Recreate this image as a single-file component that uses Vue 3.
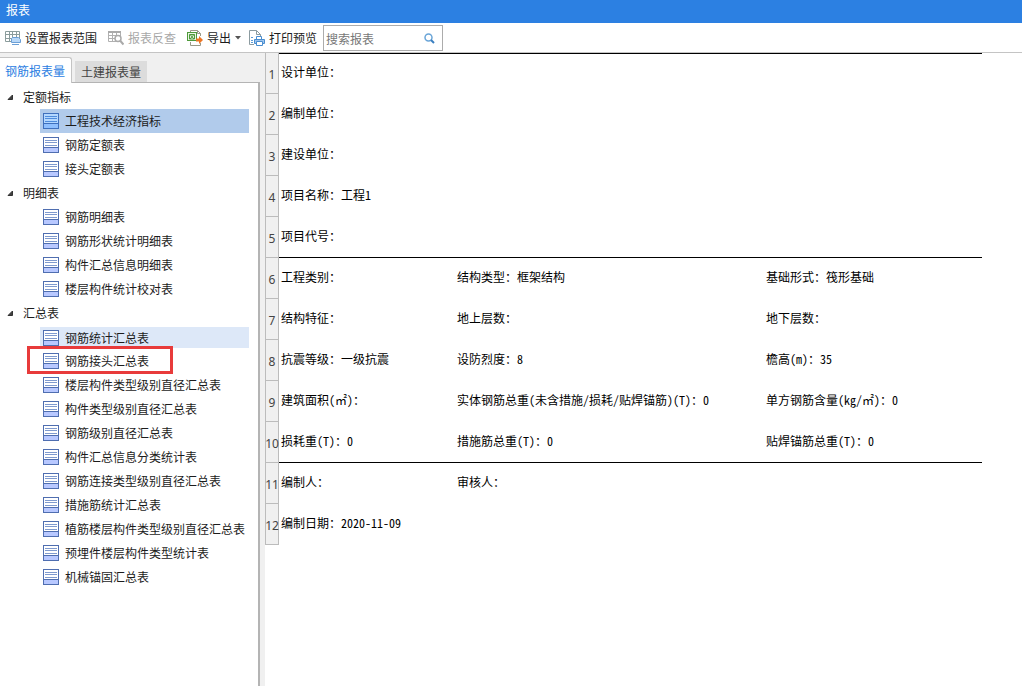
<script setup>
import { ref } from 'vue'

const search = ref('')
const activeTab = ref('钢筋报表量')
const selected = ref('工程技术经济指标')
const hovered = '钢筋统计汇总表'
const marked = '钢筋接头汇总表'

const tabs = ['钢筋报表量', '土建报表量']

const groups = [
  { name: '定额指标', items: ['工程技术经济指标', '钢筋定额表', '接头定额表'] },
  { name: '明细表', items: ['钢筋明细表', '钢筋形状统计明细表', '构件汇总信息明细表', '楼层构件统计校对表'] },
  {
    name: '汇总表',
    items: [
      '钢筋统计汇总表',
      '钢筋接头汇总表',
      '楼层构件类型级别直径汇总表',
      '构件类型级别直径汇总表',
      '钢筋级别直径汇总表',
      '构件汇总信息分类统计表',
      '钢筋连接类型级别直径汇总表',
      '措施筋统计汇总表',
      '植筋楼层构件类型级别直径汇总表',
      '预埋件楼层构件类型统计表',
      '机械锚固汇总表'
    ]
  }
]

const rows = [
  ['设计单位：', '', ''],
  ['编制单位：', '', ''],
  ['建设单位：', '', ''],
  ['项目名称：工程1', '', ''],
  ['项目代号：', '', ''],
  ['工程类别：', '结构类型：框架结构', '基础形式：筏形基础'],
  ['结构特征：', '地上层数：', '地下层数：'],
  ['抗震等级：一级抗震', '设防烈度：8', '檐高(m)：35'],
  ['建筑面积(㎡)：', '实体钢筋总重(未含措施/损耗/贴焊锚筋)(T)：0', '单方钢筋含量(kg/㎡)：0'],
  ['损耗重(T)：0', '措施筋总重(T)：0', '贴焊锚筋总重(T)：0'],
  ['编制人：', '审核人：', ''],
  ['编制日期：2020-11-09', '', '']
]
const ruledRows = [5, 10]
</script>

<template>
  <div class="window">
    <header class="title">报表</header>

    <div class="toolbar">
      <button class="tool range" type="button">
        <svg width="16" height="16" viewBox="0 0 16 16" fill="none">
          <path d="M.5 1.5h14v10H.5zM.5 4.5h14M.5 8.5h14M4.5 1.5v10M7.5 1.5v10M11.5 1.5v10" stroke="#8b9c9c" />
          <path d="M7.5 7.5h6l2 2v3h-9v-4z" fill="#b9d8f8" stroke="#6b9fd6" />
          <path d="M7 14.5h7" stroke="#6b9fd6" />
        </svg>
        <span>设置报表范围</span>
      </button>
      <button class="tool lookup" type="button" disabled>
        <svg width="16" height="16" viewBox="0 0 16 16" fill="none">
          <path d="M.5 1.5h12v10H.5zM.5 5.5h12M.5 8.5h8M4.500 1.500v10M8.500 1.500v4" stroke="#b0b0b0" />
          <path d="M0 1h13v2H0z" fill="#aaa" />
          <circle cx="10" cy="8.500" r="3" fill="#fff" stroke="#aaa" stroke-width="1.500" />
          <path d="M12 10.500l3.500 4" stroke="#aaa" stroke-width="2" />
        </svg>
        <span>报表反查</span>
      </button>
      <button class="tool export" type="button">
        <svg width="16" height="16" viewBox="0 0 16 16" fill="none">
          <path d="M3.500 2V.500h7l3 3V6M3.500 12v3.500h10V13M10.500.500v3h3" stroke="#9a9a8a" />
          <rect x=".5" y="2.500" width="9" height="8" fill="#e9f5e4" stroke="#4f9a3b" />
          <path d="M3 4.500l4 4.500M7 4.500l-4 4.500M2.500 4.500h5v4.500h-5z" stroke="#4f9a3b" />
          <path d="M9 8.500h3V6l4 4-4 4v-2.500H9z" fill="#ee7624" />
        </svg>
        <span>导出</span>
        <svg class="caret" width="6" height="4" viewBox="0 0 6 4"><path d="M0 0h6L3 3.500z" fill="#555" /></svg>
      </button>
      <button class="tool print" type="button">
        <svg width="16" height="16" viewBox="0 0 16 16" fill="none">
          <path d="M5 14.500H.5V.5h7l4 4V6M7.500.5v4h4" stroke="#8c9ba0" />
          <path d="M2 7.500h2M2 10.500h2M2 12.500h2" stroke="#5b9bd5" />
          <path d="M7.500 9V6.500h5V9" fill="#fff" stroke="#4a8ed0" />
          <path d="M5.500 9.500h10v4h-10z" fill="#9cc4ee" stroke="#4a8ed0" />
          <path d="M7.500 11.500h6v4h-6z" fill="#fff" stroke="#4a8ed0" />
        </svg>
        <span>打印预览</span>
      </button>
      <div class="search">
        <input v-model="search" type="text" placeholder="搜索报表" aria-label="搜索报表" />
        <button type="button" aria-label="搜索">
          <svg width="11" height="11" viewBox="0 0 11 11" fill="none">
            <circle cx="4.500" cy="4.500" r="3.500" stroke="#6aa5d8" stroke-width="1.500" />
            <path d="M7 7l3 3" stroke="#3a7fc0" stroke-width="2" />
          </svg>
        </button>
      </div>
    </div>

    <div class="body">
      <aside class="side">
        <div class="tabs" role="tablist">
          <button
            v-for="t in tabs"
            :key="t"
            type="button"
            role="tab"
            :aria-selected="t === activeTab"
            :class="['tab', { active: t === activeTab }]"
            @click="activeTab = t"
          >{{ t }}</button>
        </div>
        <ul class="tree">
          <li v-for="g in groups" :key="g.name">
            <div class="group">
              <svg width="7" height="7" viewBox="0 0 7 7"><path d="M5.500 1v4.500H1z" fill="#404040" stroke="#333" /></svg>
              <span>{{ g.name }}</span>
            </div>
            <ul>
              <li v-for="item in g.items" :key="item" :class="['leaf', { marked: item === marked }]">
                <button
                  type="button"
                  :class="['item', { selected: item === selected, hovered: item === hovered }]"
                  @click="selected = item"
                >
                  <svg width="16" height="16" viewBox="0 0 16 16">
                    <path class="sheet" d="M0 0h16v16H0z" />
                    <path class="page" d="M1 1h14v9H1z" />
                    <path class="band" d="M1 11h14v4H1z" />
                    <path class="lines" d="M2 3h12v1H2zM2 5h12v1H2zM2 8h12v1H2z" />
                  </svg>
                  <span>{{ item }}</span>
                </button>
              </li>
            </ul>
          </li>
        </ul>
      </aside>

      <main class="report">
        <table>
          <colgroup>
            <col class="c-num" />
            <col class="c-first" />
            <col class="c-second" />
            <col />
          </colgroup>
          <tbody>
            <tr v-for="(row, i) in rows" :key="i" :class="{ ruled: ruledRows.includes(i + 1), first: i === 0 }">
              <th scope="row"><span>{{ i + 1 }}</span></th>
              <td v-for="(cell, j) in row" :key="j">{{ cell }}</td>
            </tr>
          </tbody>
        </table>
      </main>
    </div>
  </div>
</template>

<style>
body {
  background: #fff;
}
</style>

<style scoped>
.window {
  display: flex;
  flex-direction: column;
  min-height: 100vh;
  font: 12px/16px 'Noto Sans CJK SC', sans-serif;
  color: #1c1c1c;
}
button {
  font: inherit;
  color: inherit;
  background: none;
  border: 0;
  padding: 0;
  margin: 0;
}
svg {
  flex: none;
}
.title {
  height: 19px;
  padding: 1px 6px 3px;
  line-height: 18px;
  color: #fff;
  background: #2c80e2;
}
.toolbar {
  display: flex;
  align-items: center;
  height: 28px;
  padding: 1px 5px 0;
  background: #fff;
  border-bottom: 1px solid #c4c4c4;
}
.tool {
  display: flex;
  align-items: center;
  gap: 4px;
  height: 24px;
  margin-right: 11px;
  white-space: nowrap;
}
.tool:disabled {
  color: #a8a8a8;
}
.tool.export {
  margin-right: 8px;
}
.tool.print {
  margin-right: 6px;
}
.search {
  display: flex;
  align-items: center;
  box-sizing: border-box;
  width: 120px;
  height: 26px;
  border: 1px solid #acacac;
  background: #fff;
}
.search input {
  flex: 1;
  min-width: 0;
  height: 24px;
  box-sizing: border-box;
  padding: 0 2px;
  border: 0;
  outline: 0;
  font: inherit;
  background: none;
}
.search input::placeholder {
  color: #777;
  opacity: 1;
}
.search button {
  display: flex;
  padding: 0 7px;
}
.body {
  display: flex;
  flex: 1;
}
.side {
  display: flex;
  flex-direction: column;
  flex: none;
  width: 260px;
  padding-right: 5px;
  background: #f0f0f0;
}
.tabs {
  display: flex;
  align-items: flex-end;
  gap: 3px;
  height: 29px;
  border-bottom: 1px solid #b4b4b4;
}
.tab {
  box-sizing: border-box;
  width: 72px;
  height: 21px;
  background: #dcdcdc;
  color: #444;
  white-space: nowrap;
}
.tab.active {
  height: 26px;
  margin-bottom: -1px;
  padding: 0 1px 0 0;
  background: #fff;
  color: #2c80e2;
  border: 1px solid #c4c4c4;
  border-width: 1px 1px 0 0;
  border-radius: 0 3px 0 0;
}
.tree {
  flex: 1;
  padding: 2px 9px 0 0;
  background: #fff;
  border-right: 2px solid #b4b4b4;
}
ul {
  list-style: none;
  margin: 0;
  padding: 0;
}
.group {
  display: flex;
  align-items: center;
  gap: 9px;
  height: 24px;
  padding-left: 7px;
}
.leaf {
  position: relative;
  padding-left: 40px;
}
.item {
  display: flex;
  align-items: center;
  gap: 6px;
  width: 100%;
  height: 24px;
  padding-left: 3px;
  white-space: nowrap;
  text-align: left;
}
.item.selected {
  background: #b1cbeb;
}
.item.hovered {
  box-sizing: border-box;
  border-top: 2px solid #fff;
  border-bottom: 1px solid #fff;
  background: #dde8f8;
}
.sheet {
  fill: #4f6eb0;
}
.page {
  fill: #fff;
}
.band {
  fill: #b8c8ff;
}
.lines {
  fill: #7f9ace;
}
.selected .sheet {
  fill: #3f70bd;
}
.selected .page {
  fill: #b4d8ff;
}
.selected .band {
  fill: #8fc0ff;
}
.selected .lines {
  fill: #4f8cdc;
}
.marked::after {
  content: '';
  position: absolute;
  inset: -3px auto -1px 27px;
  width: 140px;
  border: 3px solid #e83b3b;
  pointer-events: none;
}
.report {
  flex: 1;
  min-width: 0;
  background: #fff;
}
table {
  width: calc(100% - 40px);
  table-layout: fixed;
  border-collapse: separate;
  border-spacing: 0;
}
.c-num {
  width: 14px;
}
.c-first {
  width: 176px;
}
.c-second {
  width: 309px;
}
th,
td {
  box-sizing: border-box;
  height: 41px;
  padding: 0;
  vertical-align: middle;
  white-space: nowrap;
}
th {
  padding-top: 3px;
  background: #f0f0f0;
  border: 1px solid #bcbcbc;
  border-width: 0 1px 1px;
  font: 12px/16px 'Noto Sans', sans-serif;
  color: #444;
}
th span {
  display: flex;
  justify-content: center;
}
td {
  padding: 0 0 4px 2px;
  font-feature-settings: 'hwid';
  color: #000;
  text-align: left;
}
.ruled td {
  padding-bottom: 3px;
  border-bottom: 1px solid #000;
}
.first td {
  padding-bottom: 5px;
  border-top: 1px solid #000;
}
</style>
